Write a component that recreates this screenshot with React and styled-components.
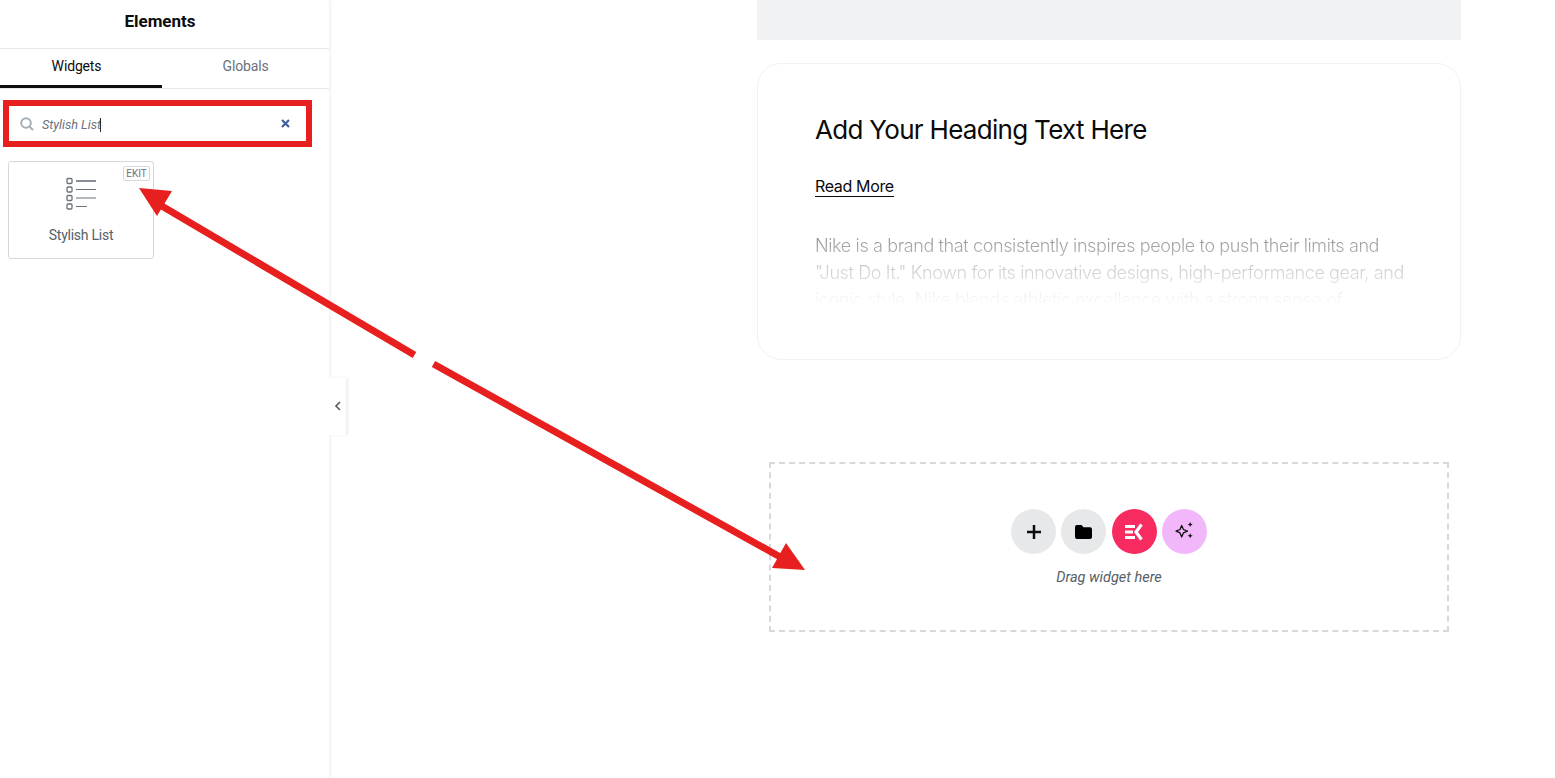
import React from "react";
import styled, {createGlobalStyle} from "styled-components";

const Global = createGlobalStyle`
  html, body {
    margin: 0;
    height: 100%;
    background: #fff;
    overflow: hidden;
  }
  * {
    box-sizing: border-box;
  }
`;

const Page = styled.div`
  position: relative;
  display: flex;
  width: 1555px;
  height: 778px;
  overflow: hidden;
  font-family: Roboto, "Liberation Sans", sans-serif;
`;

const Sidebar = styled.aside`
  position: relative;
  flex: 0 0 329px;
  height: 100%;
  background: #fff;
  box-shadow: 1px 0 4px rgba(0, 0, 0, 0.08);
`;

const Title = styled.div`
  height: 49px;
  padding: 12px 9px 0 0;
  text-align: center;
  font-size: 17px;
  line-height: 19px;
  font-weight: 700;
  color: #0c0d0e;
  border-bottom: 1px solid #e6e8ea;
`;

const Tabs = styled.div`
  display: flex;
  height: 40px;
  border-bottom: 1px solid #e6e8ea;
`;

const Tab = styled.div`
  flex: ${p => (p.$active ? "0 0 162px" : "1")};
  height: 39px;
  padding: 9px ${p => (p.$active ? "9px" : "0")} 0 0;
  text-align: center;
  font-size: 14px;
  line-height: 17px;
  letter-spacing: -0.15px;
  color: ${p => (p.$active ? "#0c0d0e" : "#69727d")};
  border-bottom: ${p => (p.$active ? "3px solid #0c0d0e" : "none")};
`;

const SearchWrap = styled.div`
  display: flex;
  align-items: center;
  width: 309px;
  height: 47px;
  margin: 11px 0 14px 3px;
  padding: 0 16px 0 11px;
  border: 6px solid #e81f1f;
  background: #fff;
`;

const SearchText = styled.span`
  flex: 1;
  margin: 2px 0 0 8px;
  font-size: 12.6px;
  font-style: italic;
  line-height: 15px;
  color: #69727d;
`;

const Caret = styled.span`
  display: inline-block;
  width: 1px;
  height: 14px;
  margin-left: -1px;
  vertical-align: -3px;
  background: #1f2a3a;
`;

const WidgetCard = styled.div`
  position: relative;
  display: flex;
  flex-direction: column;
  align-items: center;
  width: 146px;
  height: 98px;
  margin-left: 8px;
  padding-top: 15px;
  border: 1px solid #d5d8dc;
  border-radius: 3px;
`;

const Badge = styled.span`
  position: absolute;
  top: 4px;
  right: 3px;
  width: 27px;
  height: 15px;
  border: 1px solid #d5d8dc;
  border-radius: 2px;
  text-align: center;
  font-size: 10px;
  line-height: 13px;
  color: #69727d;
`;

const WidgetLabel = styled.div`
  margin-top: 17px;
  font-size: 14px;
  line-height: 17px;
  letter-spacing: -0.25px;
  color: #556068;
`;

const Handle = styled.div`
  position: absolute;
  top: 378px;
  left: 329px;
  display: flex;
  align-items: center;
  justify-content: center;
  padding-bottom: 1px;
  width: 17px;
  height: 57px;
  background: #fff;
  box-shadow: 2px 0 3px rgba(0, 0, 0, 0.07);
`;

const Canvas = styled.main`
  flex: 1;
  padding-left: 428px;
`;

const Column = styled.div`
  width: 704px;
`;

const TopBar = styled.div`
  height: 40px;
  background: #f1f2f3;
`;

const Card = styled.section`
  height: 297px;
  margin-top: 23px;
  padding: 49px 57px 0;
  border: 1px solid #f1f2f3;
  border-radius: 24px;
  font-family: Inter, Roboto, sans-serif;
`;

const Heading = styled.h2`
  margin: 0;
  font-size: 26px;
  line-height: 33px;
  font-weight: 400;
  letter-spacing: -0.7px;
  color: #0a0a0a;
`;

const ReadMore = styled.a`
  display: inline-block;
  margin-top: 31px;
  font-size: 16px;
  line-height: 19px;
  letter-spacing: -0.35px;
  color: #0a0a0a;
  border-bottom: 1px solid #0a0a0a;
`;

const Body = styled.p`
  width: 600px;
  height: 71px;
  margin: 35px 0 0;
  overflow: hidden;
  font-size: 18px;
  line-height: 27px;
  font-weight: 300;
  letter-spacing: -0.38px;
  color: #6f6f6f;
  -webkit-mask-image: linear-gradient(to bottom, rgba(0, 0, 0, 0.8) 0%, rgba(0, 0, 0, 0.35) 50%, rgba(0, 0, 0, 0.05) 95%);
  mask-image: linear-gradient(to bottom, rgba(0, 0, 0, 0.8) 0%, rgba(0, 0, 0, 0.35) 50%, rgba(0, 0, 0, 0.05) 95%);
`;

const DropZone = styled.section`
  display: flex;
  flex-direction: column;
  align-items: center;
  width: 680px;
  height: 170px;
  margin: 102px 0 0 12px;
  padding-top: 45px;
  border: 2px dashed #d5d8dc;
`;

const Buttons = styled.div`
  display: flex;
  gap: 5.33px;
`;

const RoundButton = styled.div`
  display: flex;
  align-items: center;
  justify-content: center;
  width: 45px;
  height: 45px;
  border-radius: 50%;
  background: ${p => p.$bg};
`;

const DropHint = styled.div`
  margin-top: 15px;
  font-size: 14.5px;
  line-height: 18px;
  font-style: italic;
  color: #556068;
`;

const Annotation = styled.svg`
  position: absolute;
  top: 0;
  left: 0;
  pointer-events: none;
`;

const SearchIcon = () => (
    <svg width="14" height="14" viewBox="0 0 14 14" fill="none" stroke="#a4afb7" strokeWidth="2">
        <circle cx="6" cy="6" r="4.8"/>
        <path d="M9.6 9.6 13 13"/>
    </svg>
);

const ClearIcon = () => (
    <svg width="9" height="9" viewBox="0 0 9 9" fill="none" stroke="#3f5f9c" strokeWidth="2.2">
        <path d="M1 1l7 7M8 1 1 8"/>
    </svg>
);

const ListIcon = () => (
    <svg width="32" height="33" viewBox="0 0 32 33" fill="none" stroke="#69727d">
        <rect x="2" y="1.500" width="5" height="5" rx="1" strokeWidth="1.3"/>
        <rect x="2" y="10" width="5" height="5" rx="1" strokeWidth="1.3"/>
        <rect x="2" y="18.500" width="5" height="5" rx="1" strokeWidth="1.3"/>
        <rect x="2" y="27" width="5" height="5" rx="1" strokeWidth="1.3"/>
        <path d="M11 4h20" strokeWidth="1.600"/>
        <path d="M11 12.500h20M11 21h20M11 29.500h11" strokeWidth="1.200"/>
    </svg>
);

const ElementsKit = () => (
    <svg width="18" height="18" viewBox="0 0 18 18" fill="none">
        <rect x="0" y="2" width="10" height="3" fill="#fff"/>
        <rect x="0" y="7.500" width="8" height="3" fill="#fff"/>
        <rect x="0" y="13" width="10" height="3" fill="#fff"/>
        <path d="M16.500 1.500 11 9l5.500 7.500" stroke="#fff" strokeWidth="3.200"/>
    </svg>
);

const Sparkles = () => (
    <svg width="20" height="20" viewBox="0 0 20 20" fill="none" stroke="#111" strokeWidth="1.300" strokeLinejoin="round">
        <path d="M7.700 3.500 9.400 7.500l4 1.700-4 1.700-1.700 4-1.700-4-4-1.700 4-1.700z"/>
        <path d="M16.200 0l.8 1.700 1.700.8-1.700.8-.8 1.700-.8-1.700-1.700-.8 1.700-.8zM16.200 11.300l.8 1.700 1.700.8-1.700.8-.8 1.700-.8-1.700-1.700-.8 1.700-.8z" fill="#111" stroke="none"/>
    </svg>
);

const App = () => (
    <Page>
        <Global/>
        <Sidebar>
            <Title>Elements</Title>
            <Tabs>
                <Tab $active>Widgets</Tab>
                <Tab>Globals</Tab>
            </Tabs>
            <SearchWrap>
                <SearchIcon/>
                <SearchText>Stylish List<Caret/></SearchText>
                <ClearIcon/>
            </SearchWrap>
            <WidgetCard>
                <Badge>EKIT</Badge>
                <ListIcon/>
                <WidgetLabel>Stylish List</WidgetLabel>
            </WidgetCard>
        </Sidebar>
        <Handle>
            <svg width="8" height="10" viewBox="0 0 8 10" fill="none" stroke="#515962" strokeWidth="1.6">
                <path d="M6 1 2 5l4 4"/>
            </svg>
        </Handle>
        <Canvas>
            <Column>
                <TopBar/>
                <Card>
                    <Heading>Add Your Heading Text Here</Heading>
                    <ReadMore>Read More</ReadMore>
                    <Body>
                        Nike is a brand that consistently inspires people to push their limits and
                        "Just Do It." Known for its innovative designs, high-performance gear, and
                        iconic style, Nike blends athletic excellence with a strong sense of
                    </Body>
                </Card>
                <DropZone>
                    <Buttons>
                        <RoundButton $bg="#e6e8ea">
                            <svg width="14" height="14" viewBox="0 0 14 14" stroke="#0c0d0e" strokeWidth="2.500">
                                <path d="M7 0v14M0 7h14"/>
                            </svg>
                        </RoundButton>
                        <RoundButton $bg="#e6e8ea">
                            <svg width="17" height="14" viewBox="0 0 17 14" fill="#000">
                                <path d="M2 0h4.500l2 2.200H15a2 2 0 0 1 2 2V12a2 2 0 0 1-2 2H2a2 2 0 0 1-2-2V2a2 2 0 0 1 2-2z"/>
                            </svg>
                        </RoundButton>
                        <RoundButton $bg="#f72b60"><ElementsKit/></RoundButton>
                        <RoundButton $bg="#f2b6fb"><Sparkles/></RoundButton>
                    </Buttons>
                    <DropHint>Drag widget here</DropHint>
                </DropZone>
            </Column>
        </Canvas>
        <Annotation width="1555" height="778" viewBox="0 0 1555 778">
            <g fill="#e81f1f" stroke="none">
                <path d="M139 188 172 191 157 216z"/>
                <path d="M805 570 786 543 772 568z"/>
            </g>
            <g stroke="#e81f1f" strokeWidth="7">
                <path d="M414.500 355 155 202"/>
                <path d="M433.500 364 782 558"/>
            </g>
        </Annotation>
    </Page>
);

export default App;
